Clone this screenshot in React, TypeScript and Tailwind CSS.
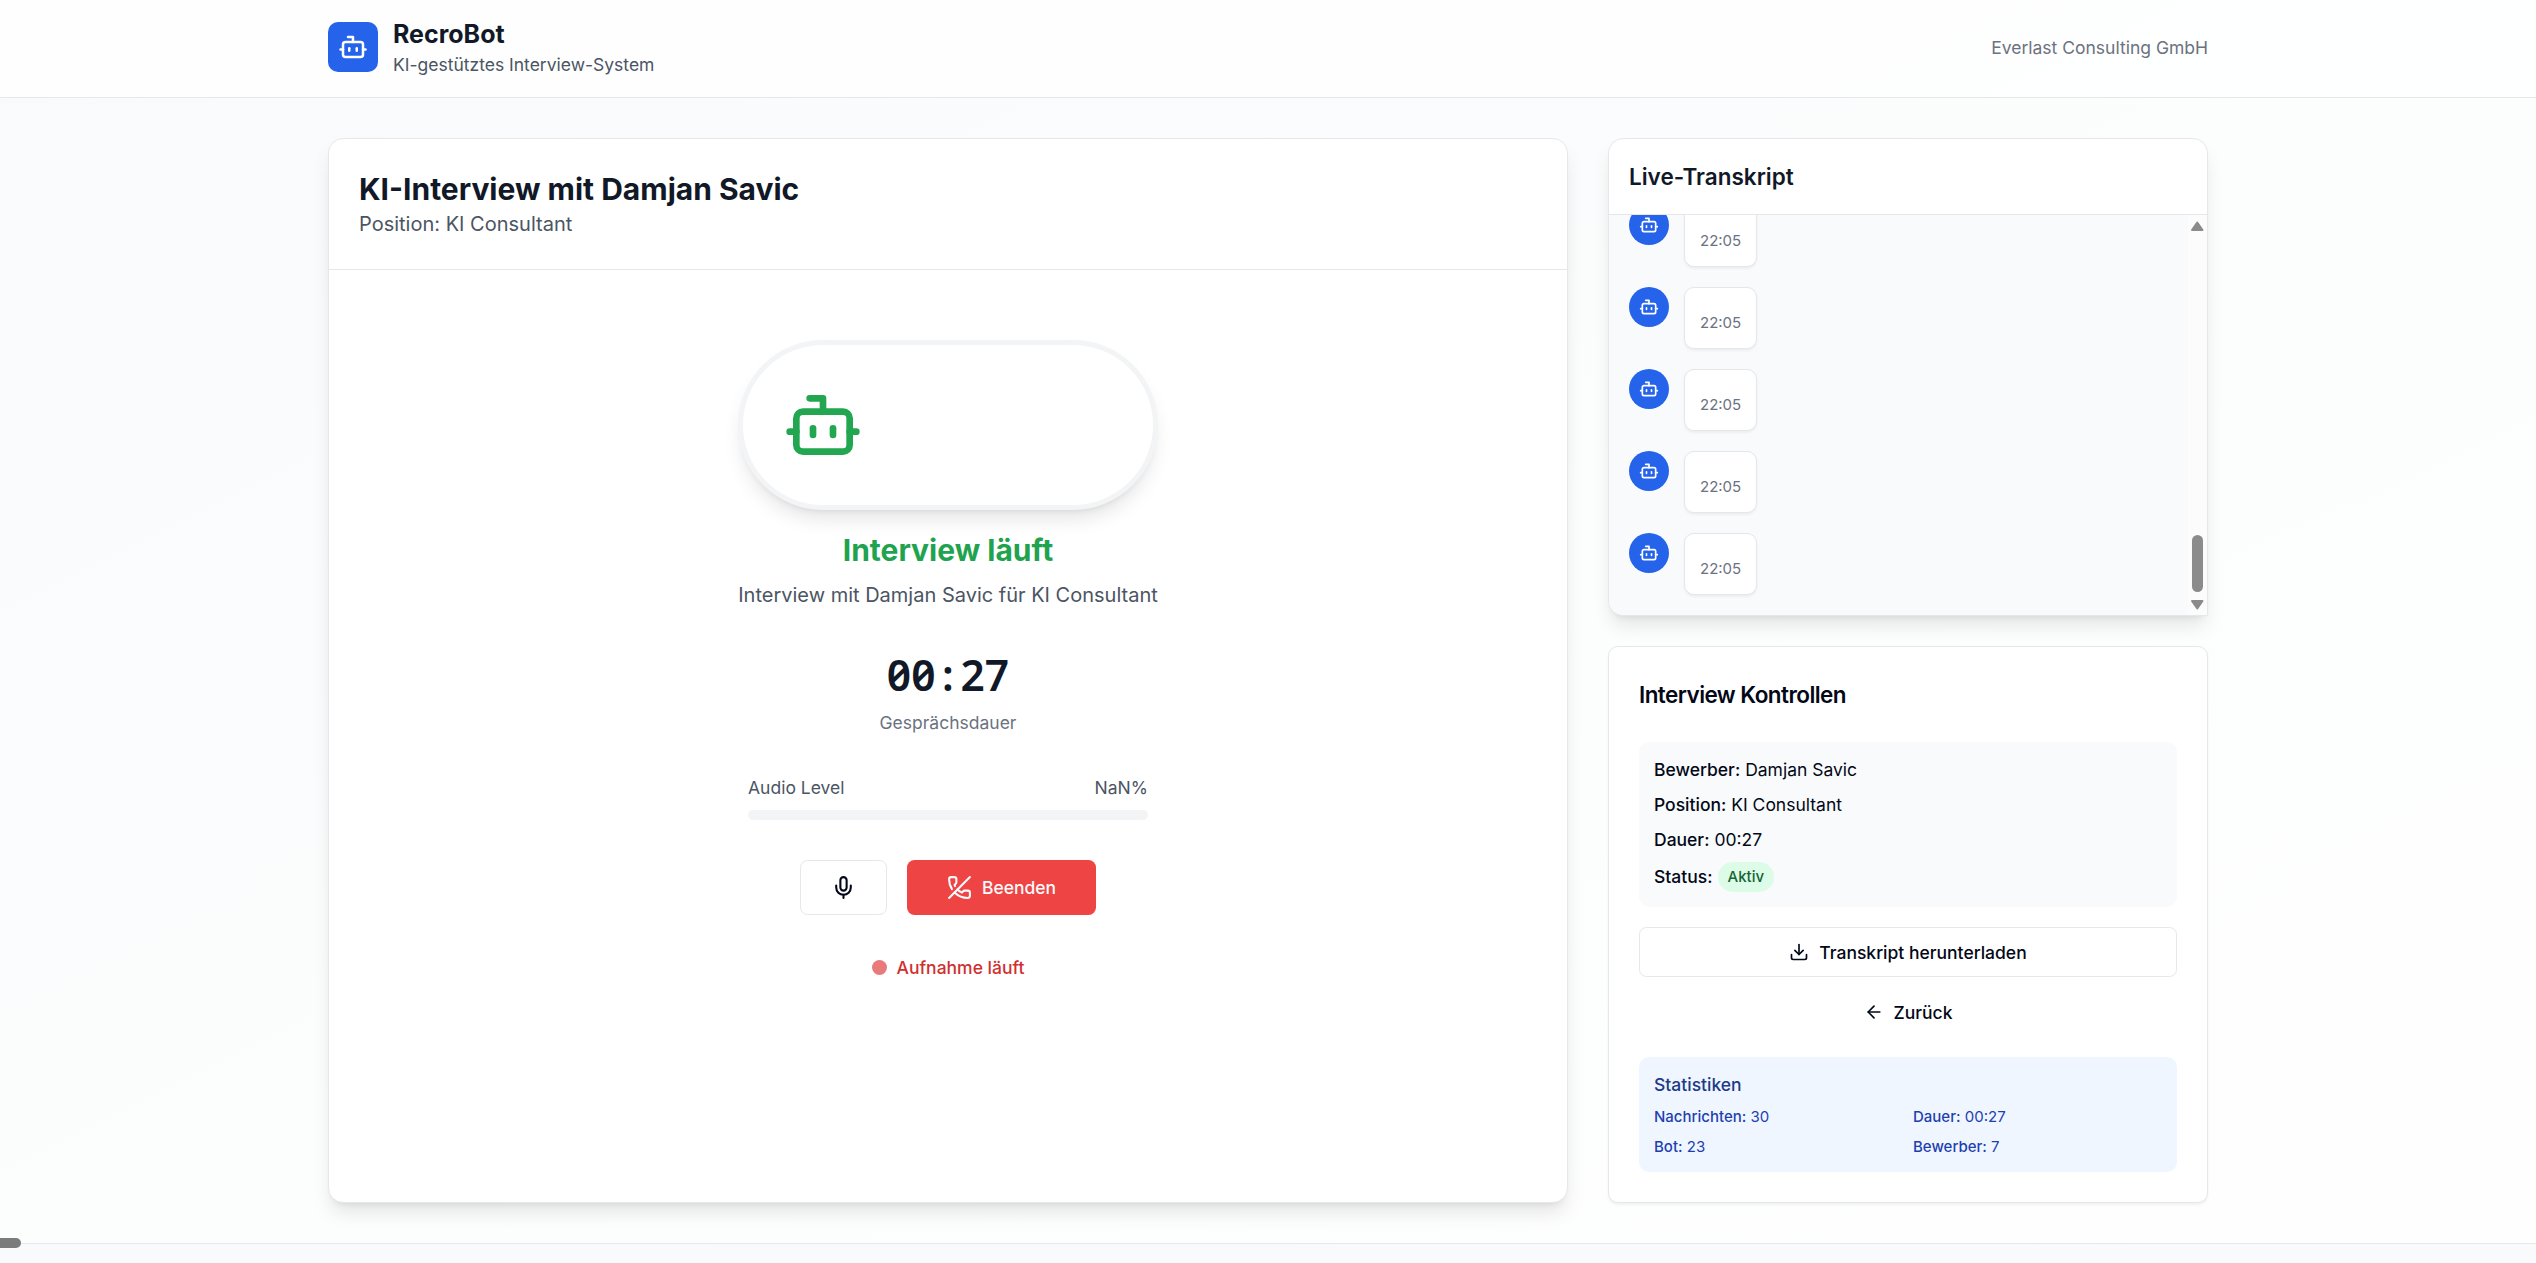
import { ArrowLeft, Bot, Download, Mic, PhoneOff } from 'lucide-react';

const messages = Array.from({ length: 5 }, (_, id) => ({ id, time: '22:05' }));

const details = [
  { label: 'Bewerber:', value: 'Damjan Savic' },
  { label: 'Position:', value: 'KI Consultant' },
  { label: 'Dauer:', value: '00:27' },
];

const stats = [
  { label: 'Nachrichten:', value: '30' },
  { label: 'Dauer:', value: '00:27' },
  { label: 'Bot:', value: '23' },
  { label: 'Bewerber:', value: '7' },
];

function Header() {
  return (
    <header className="shrink-0 border-b border-gray-200 bg-white/80 pt-[13.6px] pb-4">
      <div className="mx-auto flex w-full max-w-[1536px] items-center justify-between px-4">
        <div className="flex items-center gap-3">
          <div className="flex size-10 items-center justify-center rounded-lg bg-[#2563eb]">
            <Bot className="size-6 text-white" />
          </div>
          <div>
            <h1 className="text-xl font-bold text-[#111827]">RecroBot</h1>
            <p className="text-sm text-[#4b5563]">KI-gestütztes Interview-System</p>
          </div>
        </div>
        <p className="text-sm text-[#6b7280]">Everlast Consulting GmbH</p>
      </div>
    </header>
  );
}

function InterviewPanel() {
  return (
    <section className="col-span-2 flex flex-col rounded-xl border border-gray-200 bg-white shadow-lg">
      <div className="border-b border-gray-200 p-6">
        <h2 className="translate-y-[0.8px] text-2xl font-bold text-[#111827]">KI-Interview mit Damjan Savic</h2>
        <p className="text-[#4b5563]">Position: KI Consultant</p>
      </div>
      <div className="flex flex-col items-center gap-8 pt-14">
        <div className="flex flex-col">
          <div className="rounded-full border-4 border-gray-100 bg-white p-8 shadow-lg">
            <Bot className="size-16 text-[#22a750]" />
          </div>
          <h3 className="mt-4 translate-y-[0.8px] text-center text-2xl font-bold text-[#1fa34f]">Interview läuft</h3>
          <p className="mt-2 text-center text-[#4b5563]">
            Interview mit Damjan Savic für KI Consultant
          </p>
        </div>

        <div className="text-center">
          <div className="flex h-10 items-center justify-center font-['Noto_Sans',sans-serif] text-[34px] leading-10 font-semibold slashed-zero text-[#111827]">
            <span>00</span>
            <span className="w-5 text-center">:</span>
            <span>27</span>
          </div>
          <p className="mt-2 text-sm text-[#6b7280]">Gesprächsdauer</p>
        </div>

        <div className="w-80">
          <div className="flex justify-between text-sm text-[#4b5563]">
            <span>Audio Level</span>
            <span>NaN%</span>
          </div>
          <div className="mt-2 h-2 rounded-full bg-gray-100" />
        </div>

        <div className="flex gap-4">
          <button className="flex h-11 items-center rounded-md border border-gray-200 bg-white px-6">
            <Mic className="size-5" />
          </button>
          <button className="flex h-11 items-center gap-2 rounded-md bg-[#ef4444] px-8 text-sm font-medium text-slate-50">
            <PhoneOff className="size-5" />
            Beenden
          </button>
        </div>

        <div className="flex items-center gap-2 text-sm font-medium text-[#cf3030]">
          <span className="size-3 rounded-full bg-[#e87a7a]" />
          Aufnahme läuft
        </div>
      </div>
    </section>
  );
}

function Scrollbar() {
  return (
    <div className="flex w-[15px] shrink-0 flex-col items-center bg-[#fcfcfc] pt-[4.8px] pb-[4px] text-[#8b8b8b]">
      <svg viewBox="0 0 10 8" className="h-2 w-2.5" fill="currentColor" stroke="currentColor" strokeWidth="1.6" strokeLinejoin="round">
        <path d="M5 1.2 9.2 7.2H.8Z" />
      </svg>
      <div className="mt-auto mb-[6.4px] h-[45.6px] w-[9px] rounded-full bg-[#8b8b8b]" />
      <svg viewBox="0 0 10 8" className="h-2 w-2.5" fill="currentColor" stroke="currentColor" strokeWidth="1.6" strokeLinejoin="round">
        <path d="M5 6.8 9.2.8H.8Z" />
      </svg>
    </div>
  );
}

function Transcript() {
  return (
    <section className="flex h-[382.4px] flex-col rounded-xl rounded-br-none border border-gray-200 bg-white shadow-lg">
      <div className="border-b border-gray-200 p-4">
        <h3 className="text-lg font-semibold text-[#111827]">Live-Transkript</h3>
      </div>
      <div className="flex min-h-0 flex-1 overflow-hidden rounded-bl-xl bg-[#f9fafc]">
        <div className="flex flex-1 flex-col justify-end gap-4 overflow-hidden p-4">
          {messages.map((message) => (
            <div key={message.id} className="flex shrink-0 items-start gap-3">
              <div className="flex size-8 items-center justify-center rounded-full bg-[#2563eb]">
                <Bot className="size-4 text-white" />
              </div>
              <div className="rounded-lg border border-gray-200 bg-white p-3 shadow-xs">
                <p className="mt-2 text-xs text-[#6b7280]">{message.time}</p>
              </div>
            </div>
          ))}
        </div>
        <Scrollbar />
      </div>
    </section>
  );
}

function Controls() {
  return (
    <section className="flex-1 rounded-lg border border-gray-200 bg-white p-6 shadow-xs">
      <h3 className="text-lg font-semibold tracking-tight">Interview Kontrollen</h3>

      <div className="mt-6 space-y-2 rounded-lg bg-[#f9fafc] p-3 text-sm">
        {details.map((item) => (
          <p key={item.label}>
            <span className="font-medium">{item.label}</span> {item.value}
          </p>
        ))}
        <div className="flex h-6 items-center gap-1">
          <span className="-mt-[1.6px] font-medium">Status:</span>
          <span className="rounded-full bg-[#dcfce7] px-2 py-1 text-xs font-medium text-[#166534]">Aktiv</span>
        </div>
      </div>

      <div className="mt-4 flex flex-col gap-2 text-sm font-medium">
        <button className="flex h-10 items-center justify-center gap-2 rounded-md border border-gray-200">
          <Download className="size-4" />
          Transkript herunterladen
        </button>
        <button className="flex h-10 items-center justify-center gap-2">
          <ArrowLeft className="size-4" />
          Zurück
        </button>
      </div>

      <div className="mt-4 rounded-lg bg-[#eff6ff] p-3 text-[#1e40af]">
        <h4 className="text-sm font-medium text-[#1e3a8a]">Statistiken</h4>
        <div className="mt-2 grid grid-cols-2 gap-2 text-xs">
          {stats.map((item) => (
            <p key={item.label}>
              <span className="font-medium">{item.label}</span> {item.value}
            </p>
          ))}
        </div>
      </div>
    </section>
  );
}

export default function App() {
  return (
    <div className="relative flex h-[1010.4px] flex-col overflow-hidden bg-linear-to-br from-[#f8fafc] via-[#fcfdfd] to-[#fefefe] font-['Inter',sans-serif] text-[#020817] [zoom:1.25]">
      <Header />
      <main className="mx-auto grid h-[916px] w-full max-w-[1536px] shrink-0 grid-cols-3 gap-8 px-4 pt-8 pb-[32.8px]">
        <InterviewPanel />
        <div className="flex flex-col gap-6">
          <Transcript />
          <Controls />
        </div>
      </main>
      <footer className="h-10 shrink-0 border-t border-gray-200 bg-[#f9fafc]" />
      <div className="absolute bottom-3 left-0 h-2 w-[17px] rounded-r-full bg-[#6e6e6e]/90" />
    </div>
  );
}
